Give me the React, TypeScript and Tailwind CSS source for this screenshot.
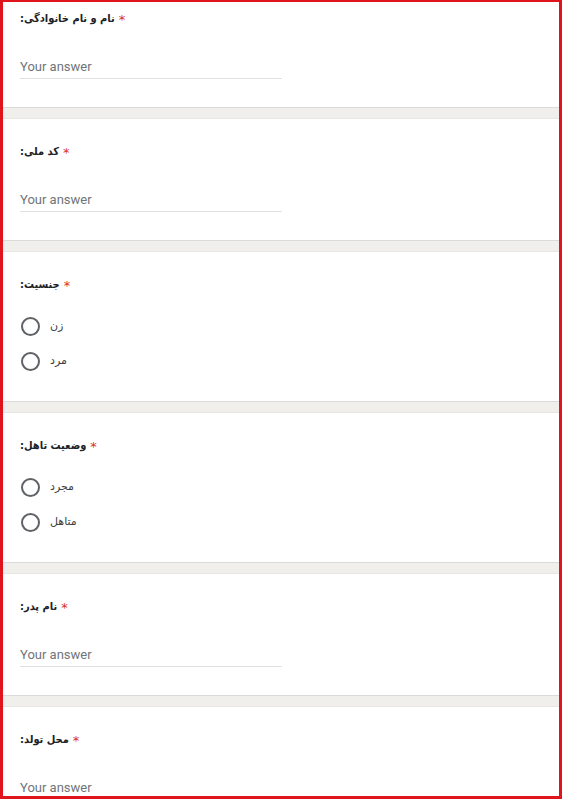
import React from "react";

const titleFont = { fontFamily: '"DejaVu Sans Condensed", "DejaVu Sans", sans-serif' };
const labelFont = { fontFamily: '"DejaVu Sans", "Noto Sans", sans-serif' };

function Title({ text }: { text: string }) {
  return (
    <div className="h-[20px] pt-[3px] flex items-center text-[11px] font-bold text-[#202124]" style={titleFont}>
      <span dir="rtl">{text}</span>
      <span className="text-[#d93025] ml-[4px] font-normal text-[13px]" style={labelFont}>*</span>
    </div>
  );
}

function TextSection({ title, first }: { title: string; first?: boolean }) {
  return (
    <div className={first ? "bg-white pl-[17px] pt-[6px] pb-[28px]" : "bg-white pl-[17px] pt-[22px] pb-[28px]"}>
      <Title text={title} />
      <div className="mt-[28px] w-[262px] border-b border-[#e0e0e0] pb-[2px]">
        <div className="h-[20px] pt-[1px] leading-[20px] text-[13px] text-[#70757a]" style={{ fontFamily: "Roboto, sans-serif" }}>
          Your answer
        </div>
      </div>
    </div>
  );
}

function Radio({ label }: { label: string }) {
  return (
    <div className="h-[20px] flex items-center">
      <div className="w-[19px] h-[19px] rounded-full border-2 border-[#5f6368]" />
      <span dir="rtl" className="ml-[10px] text-[11px] text-[#3c4043]" style={labelFont}>
        {label}
      </span>
    </div>
  );
}

function RadioSection({ title, options }: { title: string; options: string[] }) {
  return (
    <div className="bg-white pl-[18px] pt-[22px] pb-[30px]">
      <div className="-ml-[1px]">
        <Title text={title} />
      </div>
      <div className="mt-[22px] flex flex-col gap-[15px]">
        {options.map((o) => (
          <Radio key={o} label={o} />
        ))}
      </div>
    </div>
  );
}

function Band() {
  return <div className="h-[12px] bg-[#f1efec] border-t border-[#dadada] border-b border-b-[#e8e6e3]" />;
}

export default function App() {
  return (
    <div className="w-[562px] h-[799px] bg-white border-l-[3px] border-t-[2px] border-r-[3px] border-b-[3px] border-[#e0141c] overflow-hidden">
      <TextSection title="نام و نام خانوادگی:" first />
      <Band />
      <TextSection title="کد ملی:" />
      <Band />
      <RadioSection title="جنسیت:" options={["زن", "مرد"]} />
      <Band />
      <RadioSection title="وضعیت تاهل:" options={["مجرد", "متاهل"]} />
      <Band />
      <TextSection title="نام پدر:" />
      <Band />
      <TextSection title="محل تولد:" />
    </div>
  );
}
